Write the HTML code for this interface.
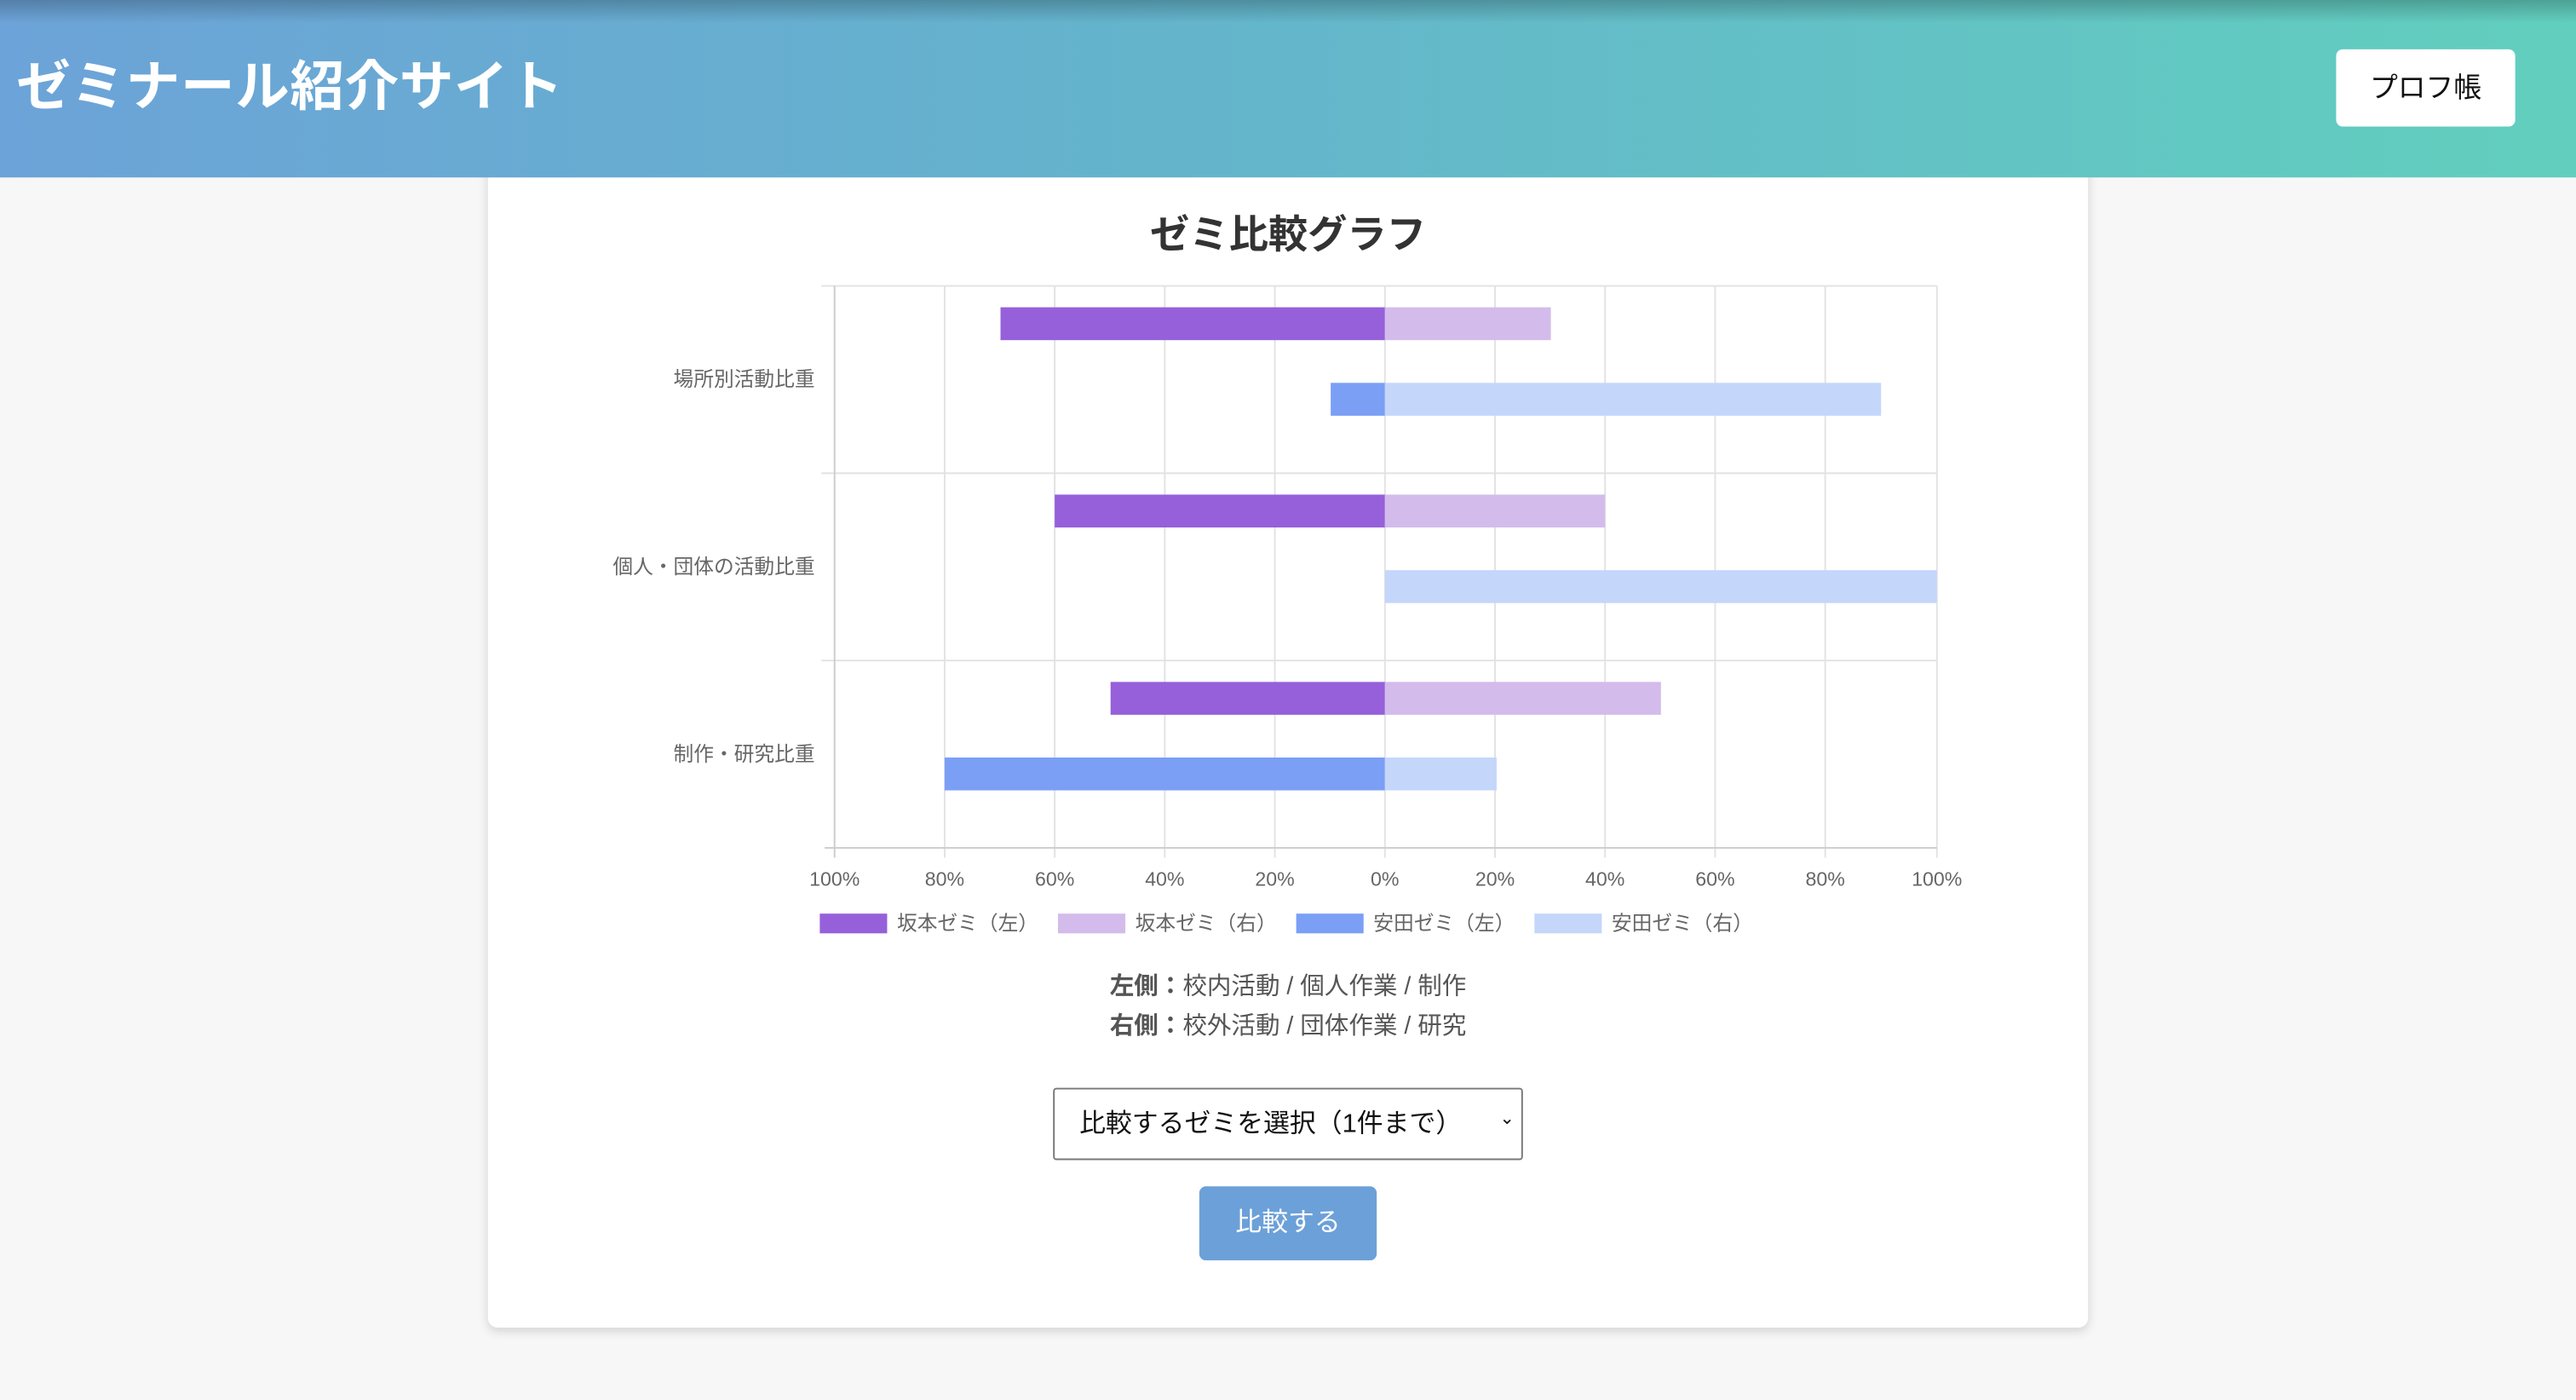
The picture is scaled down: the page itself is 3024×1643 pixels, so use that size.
<!DOCTYPE html>
<html><head><meta charset="utf-8"><style>
html,body{margin:0;padding:0;width:3024px;height:1643px;overflow:hidden;background:#f7f7f7;font-family:"Liberation Sans","Noto Sans CJK JP",sans-serif}
#w{position:absolute;left:0;top:0;width:1568px;height:852px;transform:scale(1.92857,1.92840);transform-origin:0 0}
.hdr{position:absolute;left:0;top:0;width:1568px;height:108px;background:linear-gradient(90deg,#6ca3d8,#64b4cc 45%,#62cfbe)}
.hdr:before{content:"";position:absolute;left:0;top:0;right:0;height:14px;background:linear-gradient(rgba(0,0,0,.22),rgba(0,0,0,0))}
.hdr h1{position:absolute;left:10px;top:31px;margin:0;color:#fff;font-size:33px;font-weight:bold;line-height:44px;letter-spacing:0.3px}
.pb{position:absolute;left:1422px;top:30px;width:109px;height:47px;background:#fff;border-radius:4px;font-size:17px;line-height:47px;text-align:center;color:#111}
.card{position:absolute;left:297px;top:100px;width:974px;height:708px;background:#fff;border-radius:6px;box-shadow:0 2px 6px rgba(0,0,0,.15)}
.t{position:absolute;text-align:center}
</style></head><body><div id="w">
<div class="card"></div>
<div class="hdr"><h1>ゼミナール紹介サイト</h1><div class="pb">プロフ帳</div></div>
<div class="t" style="left:297px;width:974px;top:123px;font-size:24px;font-weight:bold;color:#333">ゼミ比較グラフ</div>
<svg style="position:absolute;left:0;top:0" width="1568" height="852" viewBox="0 0 1568 852" font-family="Liberation Sans,Noto Sans CJK JP,sans-serif">
<g stroke="#e2e2e2" stroke-width="1">
<line x1="575" y1="174" x2="575" y2="522"/><line x1="642" y1="174" x2="642" y2="522"/><line x1="709" y1="174" x2="709" y2="522"/><line x1="776" y1="174" x2="776" y2="522"/><line x1="843" y1="174" x2="843" y2="522"/><line x1="910" y1="174" x2="910" y2="522"/><line x1="977" y1="174" x2="977" y2="522"/><line x1="1044" y1="174" x2="1044" y2="522"/><line x1="1111" y1="174" x2="1111" y2="522"/><line x1="1179" y1="174" x2="1179" y2="522"/>
<line x1="500" y1="174" x2="1179" y2="174"/><line x1="500" y1="288" x2="1179" y2="288"/><line x1="500" y1="402" x2="1179" y2="402"/>
</g>
<line x1="508" y1="174" x2="508" y2="522" stroke="#ccc"/><line x1="502" y1="516" x2="1179" y2="516" stroke="#ccc"/>
<g>
<rect x="609" y="187" width="234" height="20" fill="#9660da"/><rect x="843" y="187" width="101" height="20" fill="#d3bceb"/>
<rect x="810" y="233" width="33" height="20" fill="#7b9ff5"/><rect x="843" y="233" width="302" height="20" fill="#c5d6fb"/>
<rect x="642" y="301" width="201" height="20" fill="#9660da"/><rect x="843" y="301" width="134" height="20" fill="#d3bceb"/>
<rect x="843" y="347" width="336" height="20" fill="#c5d6fb"/>
<rect x="676" y="415" width="167" height="20" fill="#9660da"/><rect x="843" y="415" width="168" height="20" fill="#d3bceb"/>
<rect x="575" y="461" width="268" height="20" fill="#7b9ff5"/><rect x="843" y="461" width="68" height="20" fill="#c5d6fb"/>
</g>
<g font-size="12.3" fill="#666" text-anchor="end">
<text x="496" y="235">場所別活動比重</text><text x="496" y="349">個人・団体の活動比重</text><text x="496" y="463">制作・研究比重</text>
</g>
<g font-size="12" fill="#666" text-anchor="middle">
<text x="508" y="539">100%</text><text x="575" y="539">80%</text><text x="642" y="539">60%</text><text x="709" y="539">40%</text><text x="776" y="539">20%</text><text x="843" y="539">0%</text><text x="910" y="539">20%</text><text x="977" y="539">40%</text><text x="1044" y="539">60%</text><text x="1111" y="539">80%</text><text x="1179" y="539">100%</text>
</g>
<g font-size="12.3" fill="#666">
<rect x="499" y="556" width="41" height="12" fill="#9660da"/><text x="546" y="566">坂本ゼミ（左）</text>
<rect x="644" y="556" width="41" height="12" fill="#d3bceb"/><text x="691" y="566">坂本ゼミ（右）</text>
<rect x="789" y="556" width="41" height="12" fill="#7b9ff5"/><text x="836" y="566">安田ゼミ（左）</text>
<rect x="934" y="556" width="41" height="12" fill="#c5d6fb"/><text x="981" y="566">安田ゼミ（右）</text>
</g>
</svg>
<div class="t" style="left:297px;width:974px;top:589px;font-size:14.8px;color:#555;line-height:24px"><b>左側：</b>校内活動 / 個人作業 / 制作<br><b>右側：</b>校外活動 / 団体作業 / 研究</div>
<div style="position:absolute;left:641px;top:662px;width:284px;height:42px;border:1px solid #777;border-radius:2px;background:#fff;font-size:16px;line-height:42px;color:#111"><span style="position:absolute;left:15px;top:1px">比較するゼミを選択（1件まで）</span><span style="position:absolute;right:4px;top:-3px;font-size:11px">⌄</span></div>
<div style="position:absolute;left:730px;top:722px;width:108px;height:45px;border-radius:4px;background:#6ca0d8;color:#fff;font-size:16px;line-height:45px;text-align:center">比較する</div>
</div></body></html>
